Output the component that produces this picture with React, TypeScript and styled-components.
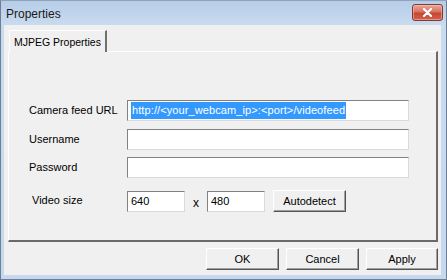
import React from "react";
import styled, { createGlobalStyle } from "styled-components";

const Global = createGlobalStyle`
  html, body { margin: 0; padding: 0; background: #c4d7ec; }
  body { font-family: "Liberation Sans", Arial, sans-serif; font-size: 11px; color: #000; }
`;

const Window = styled.div`
  width: 447px;
  height: 280px;
  box-sizing: border-box;
  display: flex;
  flex-direction: column;
  background: linear-gradient(#b6cde8 0px, #c9dbef 25px, #c6d8ed 100%);
  border: 1px solid #6e7f93;
  border-top-color: #8ea2b8;
  overflow: hidden;
`;

const TitleBar = styled.div`
  height: 24px;
  display: flex;
  align-items: center;
  justify-content: space-between;
  padding: 0 3px 0 5px;
`;

const Title = styled.span`
  font-size: 12px;
  color: #1a1a1a;
  font-family: "Liberation Sans", Arial, sans-serif;
  padding-top: 2px;
`;

const CloseButton = styled.div`
  width: 29px;
  height: 15px;
  margin-top: -1px;
  border-radius: 3px;
  border: 1px solid #7e3b32;
  background: linear-gradient(#e9a99b 0%, #d9715f 45%, #c44731 55%, #d2634c 100%);
  display: flex;
  align-items: center;
  justify-content: center;
  box-shadow: inset 0 0 0 1px rgba(255, 200, 190, 0.5);
`;

const Client = styled.div`
  flex: 1;
  margin: 0 5px 4px 3px;
  background: #f0f0f0;
  display: flex;
  flex-direction: column;
  padding: 5px 3px 5px 4px;
`;

const TabStrip = styled.div`
  display: flex;
  height: 21px;
  padding-left: 1px;
`;

const Tab = styled.div`
  width: 98px;
  box-sizing: border-box;
  border-top: 1px solid #ffffff;
  border-left: 1px solid #ffffff;
  border-right: 2px solid #707070;
  display: flex;
  align-items: center;
  justify-content: center;
  padding-top: 1px;
  font-size: 10.5px;
  position: relative;
  z-index: 1;
  background: #f0f0f0;
  margin-bottom: -1px;
`;

const TabPanel = styled.div`
  height: 191px;
  box-sizing: border-box;
  border-top: 1px solid #ffffff;
  border-left: 1px solid #ffffff;
  border-right: 2px solid #6a6a6a;
  border-bottom: 2px solid #6a6a6a;
  padding: 48px 27px 0 20px;
  display: flex;
  flex-direction: column;
`;

const Row = styled.div<{ $gap: number }>`
  display: grid;
  grid-template-columns: 98px 1fr;
  align-items: center;
  margin-top: ${(p) => p.$gap}px;
`;

const Label = styled.span<{ $shift?: number }>`
  white-space: nowrap;
  margin-left: ${(p) => p.$shift ?? 0}px;
  margin-top: -2px;
`;

const Field = styled.div<{ $width?: number }>`
  height: 21px;
  box-sizing: border-box;
  width: ${(p) => (p.$width ? `${p.$width}px` : "100%")};
  background: #ffffff;
  border-top: 1px solid #828282;
  border-left: 1px solid #828282;
  border-right: 1px solid #dadada;
  border-bottom: 1px solid #dadada;
  display: flex;
  align-items: center;
  padding: 0 3px;
  white-space: nowrap;
  overflow: hidden;
`;

const Selected = styled.span`
  background: #3399ff;
  color: #ffffff;
  line-height: 17px;
  padding: 0 1px;
  letter-spacing: 0.1px;
`;

const SizeRow = styled.div`
  display: flex;
  align-items: center;
`;

const Times = styled.span`
  width: 22px;
  text-align: center;
  font-size: 12px;
  padding-top: 3px;
`;

const Button = styled.div<{ $width: number; $offset?: number }>`
  width: ${(p) => p.$width}px;
  height: 22px;
  margin-left: ${(p) => p.$offset ?? 0}px;
  box-sizing: border-box;
  background: #f0f0f0;
  border-top: 1px solid #ffffff;
  border-left: 1px solid #ffffff;
  border-right: 1px solid #555555;
  border-bottom: 1px solid #555555;
  box-shadow: inset -1px -1px 0 #a0a0a0;
  display: flex;
  align-items: center;
  justify-content: center;
`;

const ButtonRow = styled.div`
  display: flex;
  justify-content: flex-end;
  gap: 7px;
  margin-top: 6px;
`;

export default function App() {
  return (
    <>
      <Global />
      <Window>
        <TitleBar>
          <Title>Properties</Title>
          <CloseButton>
            <svg width="11" height="9" viewBox="0 0 11 9">
              <path d="M2 1 L9 8 M9 1 L2 8" stroke="#ffffff" strokeWidth="2.2" strokeLinecap="round" />
            </svg>
          </CloseButton>
        </TitleBar>
        <Client>
          <TabStrip>
            <Tab>MJPEG Properties</Tab>
          </TabStrip>
          <TabPanel>
            <Row $gap={0}>
              <Label>Camera feed URL</Label>
              <Field>
                <Selected>http://&lt;your_webcam_ip&gt;:&lt;port&gt;/videofeed</Selected>
              </Field>
            </Row>
            <Row $gap={8}>
              <Label>Username</Label>
              <Field />
            </Row>
            <Row $gap={7}>
              <Label>Password</Label>
              <Field />
            </Row>
            <Row $gap={12}>
              <Label $shift={3}>Video size</Label>
              <SizeRow>
                <Field $width={58}>640</Field>
                <Times>x</Times>
                <Field $width={58}>480</Field>
                <Button $width={73} $offset={8}>Autodetect</Button>
              </SizeRow>
            </Row>
          </TabPanel>
          <ButtonRow>
            <Button $width={73}>OK</Button>
            <Button $width={73}>Cancel</Button>
            <Button $width={72}>Apply</Button>
          </ButtonRow>
        </Client>
      </Window>
    </>
  );
}
